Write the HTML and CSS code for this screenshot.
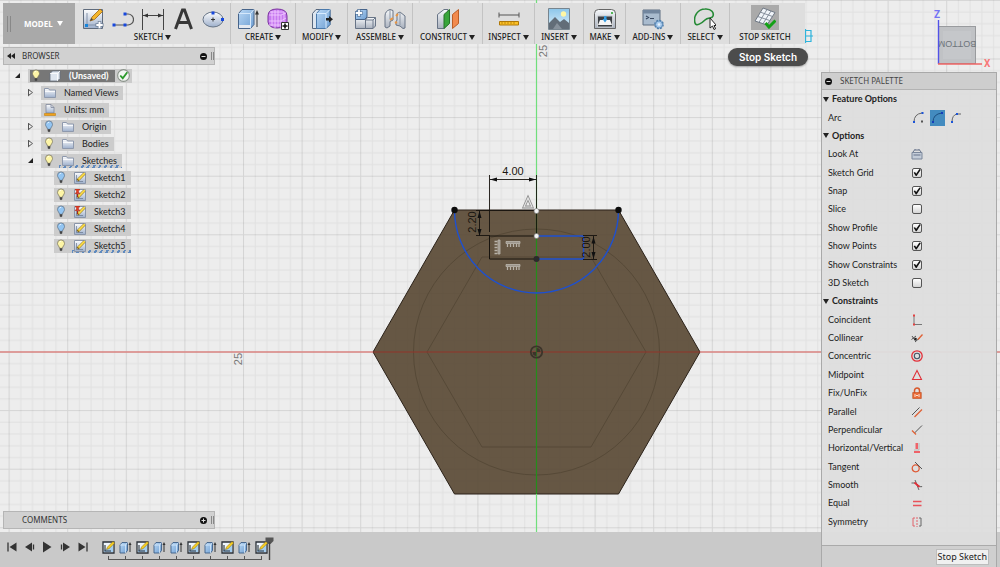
FILE: index.html
```html
<!DOCTYPE html>
<html lang="en">
<head>
<meta charset="utf-8">
<title>Unsaved - Model</title>
<link rel="stylesheet" href="styles.css">
</head>
<body>
<svg class="defs" aria-hidden="true">
  <defs>
    <linearGradient id="gBlue" x1="0" y1="0" x2="1" y2="1"><stop offset="0" stop-color="#b9d8f6"/><stop offset="1" stop-color="#6f9fd2"/></linearGradient>
    <linearGradient id="gGrey" x1="0" y1="0" x2="0" y2="1"><stop offset="0" stop-color="#f7f9fb"/><stop offset="1" stop-color="#a9b1be"/></linearGradient>
    <linearGradient id="gSheet" x1="0" y1="0" x2="0" y2="1"><stop offset="0" stop-color="#fdfdfd"/><stop offset="1" stop-color="#9eb0cc"/></linearGradient>
    <linearGradient id="gSky" x1="0" y1="0" x2="0" y2="1"><stop offset="0" stop-color="#8cc6ea"/><stop offset="1" stop-color="#dff0fa"/></linearGradient>
  </defs>
  <symbol id="bulb-on" viewBox="0 0 10 14"><path d="M5 1a3.8 3.8 0 0 1 3.8 3.8C8.800 6.800 6.800 8 6.500 10h-3C3.200 8 1.200 6.800 1.200 4.800A3.800 3.800 0 0 1 5 1z" fill="#fdf5a6" stroke="#77735d" stroke-width=".8"/><path d="M3.600 10h2.800v2L5 13.300 3.600 12z" fill="#444"/><path d="M3.500 3.500q.7-1 1.700-1" stroke="#fff" stroke-width="1" fill="none"/></symbol>
  <symbol id="bulb-off" viewBox="0 0 10 14"><path d="M5 1a3.800 3.800 0 0 1 3.800 3.800C8.800 6.800 6.800 8 6.500 10h-3C3.200 8 1.200 6.800 1.200 4.800A3.800 3.800 0 0 1 5 1z" fill="#93c5f2" stroke="#5d7186" stroke-width=".8"/><path d="M3.600 10h2.800v2L5 13.300 3.600 12z" fill="#444"/><path d="M3.500 3.500q.7-1 1.700-1" stroke="#fff" stroke-width="1" fill="none"/></symbol>
  <symbol id="folder" viewBox="0 0 12 12"><path d="M.5 10.500v-9h4l1 1.500h6v7.500z" fill="url(#gSheet)" stroke="#8e99ad"/><path d="M1 4.500h10" stroke="#fff" stroke-width=".8"/></symbol>
  <symbol id="units" viewBox="0 0 12 12"><path d="M2 9V.5h5l3 3V9z" fill="url(#gSheet)" stroke="#7d879a" stroke-width=".8"/><path d="M7 .5v3h3" fill="none" stroke="#7d879a" stroke-width=".8"/><path d="M.5 9.500h11v2H.5z" fill="#f0a21c" stroke="#c2800c" stroke-width=".6"/></symbol>
  <symbol id="cube" viewBox="0 0 12 12"><path d="M1 3.500L3.500 1H11v7.500L8.500 11H1z" fill="#dfe6ef" stroke="#65707f" stroke-width=".8"/><path d="M1 3.500h7.500V11" fill="none" stroke="#fff" stroke-width=".8"/><path d="M8.500 3.500L11 1" stroke="#fff" stroke-width=".8"/></symbol>
  <symbol id="sk" viewBox="0 0 12 12"><path d="M.5.5h11v11H.5z" fill="url(#gSheet)" stroke="#8a95a8"/><path d="M2.500 3v6.500H9" fill="none" stroke="#66758e" stroke-width=".7"/><path d="M3.500 8.500L10.500 1.500" stroke="#8b6d18" stroke-width="2.600"/><path d="M4.500 7.500L10.800 1.200" stroke="#fbdc4a" stroke-width="1.800"/></symbol>
  <symbol id="sk-pin" viewBox="0 0 12 12"><use href="#sk"/><path d="M1.500 0h4v1.200h-1V3L6 4.700H1L2.500 3V1.200h-1z" fill="#e23b22" stroke="#a82614" stroke-width=".5"/><path d="M3.500 5v3" stroke="#a82614"/></symbol>
  <symbol id="tsk" viewBox="0 0 13 13"><path d="M1 1h11v11H1z" fill="#eef5fc" stroke="#2b3138" stroke-width="1.300"/><path d="M2 9l9-5v7H2z" fill="#a3cdf0"/><path d="M3 4v6h6" fill="none" stroke="#2b3138" stroke-width="1.100"/><path d="M4.500 8.500l1-2.500L11 .5l1.700 1.600L7 7.700z" fill="#f8cf23" stroke="#806715" stroke-width=".5"/></symbol>
  <symbol id="tex" viewBox="0 0 13 13"><path d="M1 4l2-2.500h5.500v8L6.500 12H1z" fill="url(#gBlue)" stroke="#3d5e86" stroke-width=".9"/><path d="M1 4h5.500v8M6.500 4l2-2.500" fill="none" stroke="#e3f0fd" stroke-width=".7"/><path d="M11 11V3" stroke="#333"/><path d="M9.500 4L11 1l1.500 3z" fill="#333"/></symbol>
</svg>

<div class="app">
  <svg class="scene" viewBox="0 0 1000 567" preserveAspectRatio="xMidYMid slice" role="img" aria-label="Sketch canvas">
    <defs>
      <pattern id="grid" x="536" y="351.500" width="58.600" height="58.600" patternUnits="userSpaceOnUse">
        <path d="M12.200 0v58.600M23.900 0v58.600M35.700 0v58.600M47.400 0v58.600M0 12.200h58.600M0 23.900h58.600M0 35.700h58.600M0 47.400h58.600" stroke="#000" stroke-opacity=".05"/>
        <path d="M.5 0v58.600M0 .5h58.600" stroke="#000" stroke-opacity=".1"/>
      </pattern>
    </defs>
    <rect width="1000" height="567" fill="#ededed"/>
    <rect width="1000" height="567" fill="url(#grid)"/>
    <path d="M373 352L454.500 210H618.500L700 352 618.500 494H454.500z" fill="#665744" stroke="#2a2118" stroke-width="1"/>
    <path d="M373 352L454.500 210H618.500L700 352 618.500 494H454.500z" fill="url(#grid)" opacity=".25"/>
    <g fill="none" stroke="#564937" stroke-width="1"><circle cx="536.500" cy="352" r="123"/><path d="M427 352L482 257H591L646 352 591 447H482z"/></g>
    <path d="M0 352H373M700 352H1000" stroke="#dc8583" stroke-width="1.500"/>
    <path d="M373 352H700" stroke="#93352a"/>
    <path d="M536.500 0V210" stroke="#70df7c" stroke-width="1.200"/>
    <path d="M536.500 210V494" stroke="#258c1c" stroke-width="1.200"/>
    <path d="M536.500 494V567" stroke="#70df7c" stroke-width="1.200"/>
    <circle cx="536.500" cy="352" r="5.700" fill="none" stroke="#3c342a" stroke-width="1.800"/>
    <path d="M536.500 352v-4a4 4 0 0 1 4 4zM536.500 352v4a4 4 0 0 1-4-4z" fill="#3c342a"/>
    <path d="M454.500 210A82 83 0 0 0 618.500 210" fill="none" stroke="#1e50cf" stroke-width="1.400"/>
    <path d="M536.500 236H583.500V259H536.500" fill="none" stroke="#1e50cf" stroke-width="1.400"/>
    <g stroke="#16120d" fill="none">
      <path d="M536.500 236H489.500V259H536.500"/>
      <path d="M489.500 175V232M536.500 175V236M490 179.500H536M476 210.500H536M476 235.500H490M479.500 211V236M583 235.500H597M583 259.500H597M593.500 236V259" stroke-width=".9"/>
    </g>
    <g fill="#111"><path d="M490 179.500l7-2v4zM536 179.500l-7-2v4zM479.500 211l-2 7h4zM479.500 236l-2-7h4zM593.500 236.500l-2 7h4zM593.500 259l-2-7h4z"/></g>
    <g class="dim"><text x="513" y="175" text-anchor="middle">4.00</text><text transform="translate(476 222) rotate(-90)" text-anchor="middle">2.20</text><text transform="translate(590 247) rotate(-90)" text-anchor="middle">2.00</text></g>
    <g class="tick"><text transform="translate(547 51) rotate(-90)" text-anchor="middle">25</text><text transform="translate(241.500 359) rotate(-90)" text-anchor="middle">25</text></g>
    <path d="M524 207l4-9 4 9z" fill="none" stroke="#8c8c8c" stroke-width="2.800"/><path d="M524 207l4-9 4 9z" fill="none" stroke="#e4e4e4" stroke-width="1.200"/>
    <g fill="none">
      <path d="M506 241.500h14v2h-14zM506 264.500h14v2h-14z" fill="#9c958b" stroke="#bdb7ae" stroke-width=".8"/>
      <path d="M507.500 244v3M510.500 244v3M513.500 244v3M516.500 244v3M519 244v3M507.500 267v3M510.500 267v3M513.500 267v3M516.500 267v3M519 267v3" stroke="#b8b2a8" stroke-width="1.300"/>
      <path d="M498 240v14h2v-14z" fill="#9c958b" stroke="#bdb7ae" stroke-width=".8"/>
      <path d="M497.500 241.500h-3M497.500 244.500h-3M497.500 247.500h-3M497.500 250.500h-3M497.500 253.500h-3" stroke="#b8b2a8" stroke-width="1.300"/>
    </g>
    <g fill="#0c0c0c"><circle cx="454.500" cy="210" r="3.200"/><circle cx="618.500" cy="210" r="3.200"/><circle cx="536.500" cy="259" r="3" fill="#2b2b2b"/></g>
    <g fill="#f4f4f4" stroke="#777" stroke-width=".7"><circle cx="536.500" cy="211" r="2.500"/><circle cx="536.500" cy="236" r="2.500"/></g>
    <path d="M805.500 30.500H811V34M811 38V41.500H805.500M805.500 29V43M805 36H813M811 33V39" fill="none" stroke="#2fb4dc" stroke-width="1.200"/>
  </svg>

  <svg class="viewcube" viewBox="0 0 64 64" role="img" aria-label="View cube">
    <rect x="8.500" y="19.500" width="37" height="37" fill="#c0c2c5" stroke="#999b9e"/><rect x="13" y="24" width="28" height="28" fill="#c8cacd" opacity=".6"/>
    <text class="cube-face" transform="translate(27 34) rotate(180)" text-anchor="middle">BOTTOM</text>
    <path d="M8.500 13V57" stroke="#5252e8" stroke-width="1.400"/><path d="M8 57H52" stroke="#ef6565" stroke-width="1.400"/>
    <text class="axis axis-z" x="4" y="11">Z</text><text class="axis axis-x" x="54" y="60">X</text>
  </svg>

  <header class="toolbar">
    <button class="workspace"><span class="grip"></span>MODEL<i class="caret"></i></button>
    <section class="group"><div class="tools">
      <svg viewBox="0 0 22 22"><path d="M1.500 1.500h19v19h-19z" fill="url(#gSheet)" stroke="#5f6b7c"/><path d="M5 5v12h11" fill="none" stroke="#8291a9"/><path d="M8 13l2-4 8-8 2.500 2.500-8 8z" fill="#f4b62c" stroke="#9b6415" stroke-width=".8"/><path d="M8 13l1.500-3 1.500 1.500z" fill="#444"/><path d="M3 16h3v3H3z" fill="#1785db"/><path d="M17.500 13v8M13.500 17h8" stroke="#6e7f96" stroke-width="3.400"/><path d="M17.500 13.800v6.400M14.300 17h6.400" stroke="#fff" stroke-width="2"/></svg>
      <svg viewBox="0 0 22 22"><path d="M2 17h11M13 6h3a5.500 5.500 0 0 1 0 11h-3" fill="none" stroke="#555" stroke-width="1.200"/><path d="M.5 15.500h3v3h-3zM11.500 15.500h3v3h-3zM11.500 4.500h3v3h-3z" fill="#1748dd"/></svg>
      <svg viewBox="0 0 22 22"><path d="M.5 1v21M21.500 1v21M1 7.500h20" stroke="#444"/><path d="M1 7.500l5-2v4zM21 7.500l-5-2v4z" fill="#333"/></svg>
      <svg viewBox="0 0 22 22"><path d="M3.500 21L10.500 2h2L19.500 21M6.500 14.500h10" fill="none" stroke="#383838" stroke-width="3"/></svg>
      <svg viewBox="0 0 22 22"><ellipse cx="11" cy="11.500" rx="10" ry="7.500" fill="url(#gSheet)" stroke="#667486"/><path d="M9 11.500h4M11 9.500v4" stroke="#333"/><path d="M9.500 3.500h3v3h-3zM19 10h3v3h-3z" fill="#1748dd"/></svg>
    </div><button class="menu">SKETCH<i class="caret"></i></button></section>
    <section class="group"><div class="tools">
      <svg viewBox="0 0 22 22"><path d="M1.500 5.500L5 1.500h12v15l-3.500 4h-12z" fill="url(#gBlue)" stroke="#47648a"/><path d="M1.500 5.500h12v15M13.500 5.500l3.500-4" fill="none" stroke="#d5e8fb"/><path d="M2 17h11v3H2z" fill="#e4e9f0"/><path d="M20 19V5" stroke="#333"/><path d="M18 6.500L20 2l2 4.500z" fill="#333"/></svg>
      <svg viewBox="0 0 22 22"><path d="M1 8q0-7 9-7 10 0 10 7v6q-2 6-10 6T1 14z" fill="#c77af0" stroke="#7b329f"/><path d="M2 7h12M8 2v18M14 7v13M2 13h12l5-3M14 7l5-2M3 4h14M17 4v12M2 17h12M5 3v15M11 2v17" fill="none" stroke="#f2c9ff" stroke-width=".9"/><path d="M14.500 14.500h7v7h-7z" fill="#fff" stroke="#333"/><path d="M18 15.500v5M15.500 18h5" stroke="#111" stroke-width="1.600"/></svg>
    </div><button class="menu">CREATE<i class="caret"></i></button></section>
    <section class="group"><div class="tools">
      <svg viewBox="0 0 22 22"><path d="M1.500 5.500L5 1.500h14v15l-4 4h-13.500z" fill="#dce5ef" stroke="#56677d"/><path d="M5.500 5.500L9 1.500h10v15l-4 4H5.500z" fill="url(#gBlue)" stroke="#4a79ab"/><path d="M15 5.500v15M15 5.500l4-4M5.500 5.500H15" fill="none" stroke="#d9ecff"/><path d="M15 10h3V8l4 3.300-4 3.200v-2h-3z" fill="#222"/></svg>
    </div><button class="menu">MODIFY<i class="caret"></i></button></section>
    <section class="group"><div class="tools">
      <svg viewBox="0 0 22 22"><path d="M1.500 11.500h10v9h-10zM11.500 12l2-2.500h8v8.500l-2.500 2.500h-7.500z" fill="url(#gGrey)" stroke="#687486"/><path d="M1.500 4L4 1.500h9V9l-2.500 2.500h-9z" fill="url(#gBlue)" stroke="#47648a"/><path d="M11.500 12h7.500v8.500M19 12l2.500-2.500" fill="none" stroke="#6f7b8c"/><path d="M5 1v8M1 5h8" stroke="#4a6b92" stroke-width="3"/><path d="M5 1.700v6.600M1.700 5h6.600" stroke="#fff" stroke-width="1.800"/></svg>
      <svg viewBox="0 0 22 22"><path d="M1 19V8q0-5 5-6.500l3 1V12l-3 1.500V18l-3 2zM21 20V8l-5-4-3 1.500V12l-1 2v3l4 1 3 2.500z" fill="url(#gGrey)" stroke="#687486"/><path d="M6 2v9M16 4v13" stroke="#8d97a5" fill="none"/><path d="M6 12l3-2M12 8l2-2M11 15l2-1" stroke="#e99643" stroke-width="2"/></svg>
    </div><button class="menu">ASSEMBLE<i class="caret"></i></button></section>
    <section class="group"><div class="tools">
      <svg viewBox="0 0 22 22"><path d="M.5 6.500L7 1.500h4v14L7 20.500H.5z" fill="url(#gGrey)" stroke="#687486"/><path d="M7 6.500L12.500 1.500v14L7 20.500z" fill="#39a53b" stroke="#257428"/><path d="M15.500 6.500L21.500 1.500v14l-6 5z" fill="#f28a4d" stroke="#bb5e28"/></svg>
    </div><button class="menu">CONSTRUCT<i class="caret"></i></button></section>
    <section class="group"><div class="tools">
      <svg viewBox="0 0 22 22"><path d="M1 4.500v5M21 4.500v5M1 7h20" stroke="#555" fill="none"/><path d="M1.500 13.500h19v3.500h-19z" fill="#fbc127" stroke="#b07807"/><path d="M4 14v2M7 14v2M10 14v2M13 14v2M16 14v2" stroke="#a87406" stroke-width=".7"/></svg>
    </div><button class="menu">INSPECT<i class="caret"></i></button></section>
    <section class="group"><div class="tools">
      <svg viewBox="0 0 22 22"><path d="M.5.5h21v21H.5z" fill="url(#gSky)" stroke="#77858f"/><circle cx="15.500" cy="6" r="2.700" fill="#fff7a5"/><path d="M1 15l6-6 5 5 4-3 5 4v6H1z" fill="#626d78"/><path d="M5 21l4-6 5 6z" fill="#87919b"/></svg>
    </div><button class="menu">INSERT<i class="caret"></i></button></section>
    <section class="group"><div class="tools">
      <svg viewBox="0 0 22 22"><path d="M.5 5.500q0-4 4-4h13q4 0 4 4v15H.5z" fill="url(#gGrey)" stroke="#666"/><path d="M3.500 8h15v11h-15z" fill="#3b3f44" stroke="#c9ccd0"/><path d="M6 12h10l2 5H4z" fill="#f4f4f4"/><path d="M10 8h2.500v4H10z" fill="#379ce0"/><path d="M8.500 11h5L11 14.500z" fill="#379ce0"/><circle cx="18" cy="5" r="1" fill="#20a523"/></svg>
    </div><button class="menu">MAKE<i class="caret"></i></button></section>
    <section class="group"><div class="tools">
      <svg viewBox="0 0 22 22"><path d="M1 2h17v15H1z" fill="#a9bbce" stroke="#5d6d80"/><path d="M1 2h17v3.500H1z" fill="#72869e"/><path d="M4 8l2.500 1.500L4 11M8 10.500h4" fill="none" stroke="#394961" stroke-width="1.200"/><circle cx="17" cy="16.500" r="4" fill="#a7caed" stroke="#4e7dab" stroke-width="1.700" stroke-dasharray="2 1.100"/><circle cx="17" cy="16.500" r="3.500" fill="#a7caed" stroke="#4e7dab" stroke-width=".7"/><circle cx="17" cy="16.500" r="1.300" fill="#e8f2fb"/></svg>
    </div><button class="menu">ADD-INS<i class="caret"></i></button></section>
    <section class="group"><div class="tools">
      <svg viewBox="0 0 22 22"><path d="M1 15C-1 8 4 1 11 1c7-.5 9 4 8 7s-5 1-8 4-9 7-10 3z" fill="none" stroke="#258a35" stroke-width="1.600"/><path d="M16 10v10l2.500-2 1.500 3.500 1.600-.8L20 17.500h2.500z" fill="#fff" stroke="#222" stroke-width="1"/></svg>
    </div><button class="menu">SELECT<i class="caret"></i></button></section>
    <section class="group"><div class="tools active">
      <svg viewBox="0 0 22 22"><path d="M1 14L9 1l12 4.500L13 18z" fill="#f0f4f9" stroke="#6f7884"/><path d="M3.800 9.500l12 4M6.500 5.200L18.500 9.500M5 15.300L13 2.500M9 16.700l8-12.700" stroke="#7b8592" stroke-width=".9" fill="none"/><path d="M11.500 16l3.500 4 6.500-6.500" fill="none" stroke="#13a016" stroke-width="3"/></svg>
    </div><button class="menu">STOP SKETCH</button></section>
  </header>
  <div class="tooltip" role="tooltip">Stop Sketch</div>

  <aside class="left">
    <div class="bar"><svg class="rewind" viewBox="0 0 8 6"><path d="M4 0v6L0 3zM8 0v6L4 3z" fill="#222"/></svg><span>BROWSER</span><button class="round" aria-label="Collapse browser"><svg viewBox="0 0 7 7"><circle cx="3.500" cy="3.500" r="3.500" fill="#111"/><path d="M1.500 3.500h4" stroke="#ddd"/></svg></button><span class="grip end"></span></div>
    <ul class="tree">
      <li class="row"><i class="tri open"></i><div class="chip root"><span class="root-name"><svg class="bulb"><use href="#bulb-on"/></svg><svg class="ico"><use href="#cube"/></svg><b>(Unsaved)</b></span><svg class="ok" viewBox="0 0 12 12"><circle cx="6" cy="6" r="5.400" fill="#f2f5f2" stroke="#8a938a"/><path d="M3 6l2.300 2.500L9.500 3" fill="none" stroke="#2c9a2c" stroke-width="1.700"/></svg></div></li>
      <li class="row l1"><i class="tri"></i><div class="chip"><svg class="ico"><use href="#folder"/></svg><span>Named Views</span></div></li>
      <li class="row l1"><i class="tri none"></i><div class="chip"><svg class="ico"><use href="#units"/></svg><span>Units: mm</span></div></li>
      <li class="row l1"><i class="tri"></i><div class="chip"><svg class="bulb"><use href="#bulb-off"/></svg><svg class="ico"><use href="#folder"/></svg><span>Origin</span></div></li>
      <li class="row l1"><i class="tri"></i><div class="chip"><svg class="bulb"><use href="#bulb-on"/></svg><svg class="ico"><use href="#folder"/></svg><span>Bodies</span></div></li>
      <li class="row l1"><i class="tri open"></i><div class="chip hatch"><svg class="bulb"><use href="#bulb-on"/></svg><svg class="ico"><use href="#folder"/></svg><span>Sketches</span></div></li>
      <li class="row l2"><div class="chip"><svg class="bulb"><use href="#bulb-off"/></svg><svg class="ico"><use href="#sk"/></svg><span>Sketch1</span></div></li>
      <li class="row l2"><div class="chip"><svg class="bulb"><use href="#bulb-on"/></svg><svg class="ico"><use href="#sk-pin"/></svg><span>Sketch2</span></div></li>
      <li class="row l2"><div class="chip"><svg class="bulb"><use href="#bulb-off"/></svg><svg class="ico"><use href="#sk-pin"/></svg><span>Sketch3</span></div></li>
      <li class="row l2"><div class="chip"><svg class="bulb"><use href="#bulb-off"/></svg><svg class="ico"><use href="#sk"/></svg><span>Sketch4</span></div></li>
      <li class="row l2"><div class="chip hatch"><svg class="bulb"><use href="#bulb-on"/></svg><svg class="ico"><use href="#sk"/></svg><span>Sketch5</span></div></li>
    </ul>
    <div class="bar comments"><span>COMMENTS</span><button class="round" aria-label="Expand comments"><svg viewBox="0 0 7 7"><circle cx="3.500" cy="3.500" r="3.500" fill="#111"/><path d="M1.500 3.500h4M3.500 1.500v4" stroke="#ddd"/></svg></button><span class="grip end"></span></div>
  </aside>

  <footer class="timeline">
    <div class="player">
      <button aria-label="Go to start"><svg viewBox="0 0 12 12"><path d="M2 1.500v9" stroke="#333" stroke-width="1.300"/><path d="M10.500 1.500v9L3.500 6z" fill="#333"/></svg></button>
      <button aria-label="Step back"><svg viewBox="0 0 12 12"><path d="M8 1.500v9L1 6z" fill="#333"/><path d="M9.500 3.500v5" stroke="#333" stroke-width="1.300"/></svg></button>
      <button aria-label="Play"><svg viewBox="0 0 12 12"><path d="M1 .5v11L9.500 6z" fill="#333"/></svg></button>
      <button aria-label="Step forward"><svg viewBox="0 0 12 12"><path d="M3 1.500v9L10 6z" fill="#333"/><path d="M1.500 3.500v5" stroke="#333" stroke-width="1.300"/></svg></button>
      <button aria-label="Go to end"><svg viewBox="0 0 12 12"><path d="M9 1.500v9" stroke="#333" stroke-width="1.300"/><path d="M.5 1.500v9L7.500 6z" fill="#333"/></svg></button>
    </div>
    <ol class="features">
      <li><svg><use href="#tsk"/></svg></li><li><svg><use href="#tex"/></svg></li><li><svg><use href="#tsk"/></svg></li><li><svg><use href="#tex"/></svg></li><li><svg><use href="#tex"/></svg></li><li><svg><use href="#tsk"/></svg></li><li><svg><use href="#tex"/></svg></li><li><svg><use href="#tsk"/></svg></li><li><svg><use href="#tex"/></svg></li><li><svg><use href="#tsk"/></svg></li>
    </ol>
    <svg class="marker" viewBox="0 0 9 23"><path d="M.5.5h8v3.500L5.500 7h-2L.5 4z" fill="#555"/><path d="M4.500 5v18" stroke="#444" stroke-width="1.400"/></svg>
  </footer>

  <form class="palette">
    <h2 class="pal-head"><svg viewBox="0 0 7 7"><circle cx="3.500" cy="3.500" r="3.500" fill="#111"/><path d="M1.500 3.500h4" stroke="#ddd"/></svg>SKETCH PALETTE</h2>
    <div class="pal-body">
      <h3><i class="caret"></i>Feature Options</h3>
      <div class="opt"><span>Arc</span><div class="arcs">
        <button type="button" aria-label="3-point arc"><svg viewBox="0 0 15 15"><path d="M3 12Q3 4 11 3" fill="none" stroke="#666"/><path d="M2 11h2v2H2zM10.500 2h2v2h-2z" fill="#1c55d8"/><path d="M10 10.500h2v2h-2z" fill="#555"/></svg></button>
        <button type="button" class="on" aria-label="Center point arc"><svg viewBox="0 0 15 15"><path d="M3 12Q3 4 12 3" fill="none" stroke="#1c4f80"/><path d="M2 11h2v2H2zM11 2h2v2h-2z" fill="#153dbb"/></svg></button>
        <button type="button" aria-label="Tangent arc"><svg viewBox="0 0 15 15"><path d="M3 12Q3 5 8 4h4" fill="none" stroke="#666"/><path d="M2 11h2v2H2zM7 3h2v2H7z" fill="#1c55d8"/></svg></button>
      </div></div>
      <h3><i class="caret"></i>Options</h3>
      <div class="opt"><span>Look At</span><button type="button" class="con" aria-label="Look At"><svg viewBox="0 0 12 12"><path d="M1 4.500h10v6.500H1z" fill="#c3ccd8" stroke="#7b879b"/><path d="M2 4L3.500 2h5L10 4M4 2V1M8 2V1M2.500 7h7" fill="none" stroke="#66738a"/></svg></button></div>
      <label class="opt"><span>Sketch Grid</span><input type="checkbox" checked></label>
      <label class="opt"><span>Snap</span><input type="checkbox" checked></label>
      <label class="opt"><span>Slice</span><input type="checkbox"></label>
      <label class="opt"><span>Show Profile</span><input type="checkbox" checked></label>
      <label class="opt"><span>Show Points</span><input type="checkbox" checked></label>
      <label class="opt"><span>Show Constraints</span><input type="checkbox" checked></label>
      <label class="opt"><span>3D Sketch</span><input type="checkbox"></label>
      <h3><i class="caret"></i>Constraints</h3>
      <div class="opt"><span>Coincident</span><button type="button" class="con" aria-label="Coincident"><svg viewBox="0 0 12 12"><path d="M3 2v8.500h8" fill="none" stroke="#777"/><path d="M2 .5h2v2H2zM2 9.500h2v2H2z" fill="#e34040"/></svg></button></div>
      <div class="opt"><span>Collinear</span><button type="button" class="con" aria-label="Collinear"><svg viewBox="0 0 12 12"><path d="M1 4l3.500 5M.5 7.500L5 4M4 10l4.500-4" fill="none" stroke="#444" stroke-width=".9"/><circle cx="4.500" cy="7" r="1.300" fill="#222"/><path d="M7 7.500L11.500 2.500" stroke="#e06034" stroke-width="1.300"/></svg></button></div>
      <div class="opt"><span>Concentric</span><button type="button" class="con" aria-label="Concentric"><svg viewBox="0 0 12 12"><circle cx="6" cy="6" r="5.200" fill="none" stroke="#e22f38" stroke-width="1.300"/><circle cx="6" cy="6" r="2.700" fill="none" stroke="#455566" stroke-width="1.100"/></svg></button></div>
      <div class="opt"><span>Midpoint</span><button type="button" class="con" aria-label="Midpoint"><svg viewBox="0 0 12 12"><path d="M1.500 10.500L6 1.500l4.500 9z" fill="none" stroke="#df3038" stroke-width="1.100"/></svg></button></div>
      <div class="opt"><span>Fix/UnFix</span><button type="button" class="con" aria-label="Fix/UnFix"><svg viewBox="0 0 12 12"><path d="M3.500 6V3.500a2.500 2.500 0 0 1 5 0V6" fill="none" stroke="#d9582b" stroke-width="1.500"/><path d="M1.700 5.500h8.600v6H1.700z" fill="#ea6a35" stroke="#b94920" stroke-width=".6"/><path d="M4 7v3M8 7v3M5 8.500h2" stroke="#fbe3d6"/></svg></button></div>
      <div class="opt"><span>Parallel</span><button type="button" class="con" aria-label="Parallel"><svg viewBox="0 0 12 12"><path d="M1 9L8.500 1.500" stroke="#555"/><path d="M3.500 11L11 3.500" stroke="#e06034" stroke-width="1.300"/></svg></button></div>
      <div class="opt"><span>Perpendicular</span><button type="button" class="con" aria-label="Perpendicular"><svg viewBox="0 0 12 12"><path d="M3.500 9L11 1.500" stroke="#555"/><path d="M1 6.500L5 10.500" stroke="#e06034" stroke-width="1.300"/></svg></button></div>
      <div class="opt"><span>Horizontal/Vertical</span><button type="button" class="con" aria-label="Horizontal/Vertical"><svg viewBox="0 0 12 12"><path d="M4.500 1h2.500v6H4.500z" fill="#ef6269"/><path d="M3 9h6v2H3z" fill="#ef6269"/><path d="M8 1v7H3" fill="none" stroke="#aaa" stroke-width=".7"/></svg></button></div>
      <div class="opt"><span>Tangent</span><button type="button" class="con" aria-label="Tangent"><svg viewBox="0 0 12 12"><circle cx="4.700" cy="7.300" r="3.500" fill="none" stroke="#df5732" stroke-width="1.200"/><path d="M4 1l7 7" stroke="#555"/></svg></button></div>
      <div class="opt"><span>Smooth</span><button type="button" class="con" aria-label="Smooth"><svg viewBox="0 0 12 12"><path d="M.5 4Q5 3 6 6t2 5M4 1Q5 5 8 7t3 0" fill="none" stroke="#555" stroke-width=".9"/><path d="M3.500 3.500L8.500 8" stroke="#e22f38" stroke-width="1.700"/></svg></button></div>
      <div class="opt"><span>Equal</span><button type="button" class="con" aria-label="Equal"><svg viewBox="0 0 12 12"><path d="M2 4.500h8.500M2 8.500h8.500" stroke="#e8525a" stroke-width="1.400"/></svg></button></div>
      <div class="opt"><span>Symmetry</span><button type="button" class="con" aria-label="Symmetry"><svg viewBox="0 0 12 12"><path d="M4 2H2v8h2" fill="none" stroke="#e0626a"/><path d="M8 2h2v8H8" fill="none" stroke="#666"/><path d="M6 1v10" stroke="#e0626a" stroke-dasharray="2 1"/></svg></button></div>
    </div>
    <div class="pal-foot"><button type="button">Stop Sketch</button></div>
  </form>
</div>
</body>
</html>
```
FILE: styles.css
```css
* { box-sizing: border-box; }
body { margin: 0; font: 9px/14px Lato, "Noto Sans", sans-serif; color: #222222; background: #ededed; }
button { font: inherit; color: inherit; background: none; border: 0; padding: 0; margin: 0; }
svg { display: block; flex: none; }
ul, ol { list-style: none; margin: 0; padding: 0; }
h2, h3 { margin: 0; font: inherit; }
.defs { position: absolute; width: 0; height: 0; }

.app { position: relative; display: flex; flex-direction: column; min-height: 100vh; overflow: hidden; }
.scene { position: absolute; inset: 0; width: 100%; height: 100%; }
.dim { font: 11px "Liberation Sans", sans-serif; fill: #1b1712; }
.tick { font: 11px "Liberation Sans", sans-serif; fill: #777777; }
.viewcube { position: absolute; top: 7px; right: 6px; width: 64px; height: 64px; }
.cube-face { font: bold 9px "Liberation Sans", sans-serif; font-weight: normal; fill: #6f757c; }
.axis { font: bold 10px Roboto, sans-serif; }
.axis-z { fill: #7474f4; }
.axis-x { fill: #f87878; }

.caret { display: inline-block; width: 0; height: 0; margin-left: 2px; border: 3px solid transparent; border-top: 5px solid currentColor; border-bottom: 0; }
.grip { width: 4px; height: 16px; border: solid #888888; border-width: 0 1px; }
.workspace, .menu, .bar, .pal-head { font: 8px/12px "Noto Sans", sans-serif; }

.toolbar { position: relative; display: grid; grid-template-columns: 72px 156px 65px 52px 65px 70px 52px 49px 42px 55px 49px 75px; width: max-content; height: 41px; margin: 3px 0 0 3px; background: #dedede; }
.workspace { display: flex; align-items: center; padding-left: 4px; color: #ffffff; background: #a9a9a9; font-weight: bold; }
.workspace .grip { margin-right: 13px; }
.workspace .caret { margin-left: 4px; }
.group { display: flex; flex-direction: column; align-items: center; justify-content: space-between; padding-bottom: 1px; border-right: 1px solid #c3c3c3; }
.group:last-child { border-right: 0; padding-right: 5px; }
.tools { display: flex; justify-content: center; gap: 8px; padding-top: 5px; }
.tools svg { width: 22px; height: 22px; }
.tools.active { width: 28px; height: 25px; margin-top: 2px; padding-top: 2px; background: #aaaaaa; }
.menu { height: 13px; font-weight: 500; white-space: nowrap; color: #222222; }

.tooltip { position: absolute; top: 48px; left: 728px; padding: 0 11px; border-radius: 9px; background: #4c4c4c; color: #ffffff; font: 600 10px/18px Inter, sans-serif; box-shadow: 0 1px 2px #00000055; }

.left { position: relative; display: flex; flex: 1; flex-direction: column; width: 212px; margin: 3px 0 3px 3px; }
.bar { display: flex; align-items: center; height: 18px; padding-left: 3px; background: #d1d1d1; border: 1px solid #b5b5b5; color: #333333; }
.bar .rewind { width: 8px; height: 6px; margin-right: 7px; }
.bar .round { margin-left: auto; }
.round svg { width: 7px; height: 7px; }
.bar .end { width: 3px; height: 8px; margin-left: 4px; }
.comments { margin-top: auto; padding-left: 18px; }

.tree { padding-top: 2px; }
.row { display: flex; align-items: center; height: 17px; padding-left: 12px; }
.l1 { padding-left: 25px; }
.l2 { padding-left: 51px; }
.tri { width: 5px; height: 8px; margin-right: 8px; background: #555555; clip-path: polygon(0 0, 100% 50%, 0 100%, 0 0, 1px 2px, 1px 6px, 4px 4px, 1px 2px); }
.tri.open { height: 5px; background: #222222; clip-path: polygon(100% 0, 100% 100%, 0 100%); }
.tri.none { background: none; }
.chip { display: flex; align-items: center; height: 14px; padding: 0 5px 0 2px; gap: 8px; background: #cccccc; color: #222222; white-space: nowrap; }
.l1 .chip { padding-left: 3px; }
.bulb { width: 10px; height: 13px; }
.ico { width: 12px; height: 12px; }
.hatch { background: repeating-linear-gradient(120deg, #5f8abf 0 2px, transparent 2px 5px) 18px 100% / 100% 3px no-repeat #cccccc; }
.root { gap: 2px; padding: 0 2px; }
.root-name { display: flex; align-items: center; gap: 8px; padding: 0 6px 0 1px; background: #777777; color: #ffffff; height: 12px; }
.ok { width: 13px; height: 13px; }

.timeline { position: relative; display: flex; height: 35px; padding: 9px 6px 0; background: #c9c9c9; }
.player { display: flex; gap: 6px; margin-right: 10px; }
.player button { width: 12px; height: 12px; }
.player svg { width: 12px; height: 12px; }
.features { display: flex; }
.features li { width: 17px; height: 19px; padding-left: 2px; background: linear-gradient(#555555, #555555) 8px 100% / 1px 4px no-repeat, linear-gradient(#555555, #555555) 0 100% / 100% 1px no-repeat; }
.features li:first-child { background-size: 1px 4px, 9px 1px; background-position: 8px 100%, 100% 100%; }
.features li:last-child { background-size: 1px 4px, 9px 1px; }
.features svg { width: 13px; height: 13px; }
.marker { width: 9px; height: 23px; margin: -4px 0 0 -5px; }

.palette { position: absolute; top: 72px; right: 3px; bottom: 0; display: flex; flex-direction: column; width: 176px; border: 1px solid #a9a9a9; border-bottom: 0; background: #dededef5; }
.pal-head { display: flex; align-items: center; gap: 8px; height: 17px; padding-left: 3px; background: #cecece; border-bottom: 1px solid #b3b3b3; color: #444444; }
.pal-head svg { width: 7px; height: 7px; }
.pal-body { display: grid; flex: 1; grid-auto-rows: minmax(18px, 1fr); padding-bottom: 14px; }
.pal-body h3 { display: flex; align-items: center; gap: 3px; font-weight: bold; }
.pal-body .caret { margin-left: 1px; }
.opt { display: grid; grid-template-columns: 83px 1fr; align-items: center; padding-left: 6px; }
.opt input { appearance: none; display: grid; justify-items: center; width: 10px; height: 10px; margin: 0 0 0 1px; border: 1px solid #555555; border-radius: 2px; background: linear-gradient(#ffffff, #d5d5d5); }
.opt input:checked::after { content: ""; width: 8px; height: 8px; background: #111111; clip-path: polygon(8% 50%, 25% 42%, 40% 62%, 80% 5%, 98% 12%, 45% 92%, 35% 92%); }
.con, .con svg { width: 12px; height: 12px; }
.arcs { display: flex; gap: 4px; }
.arcs button { width: 15px; height: 16px; }
.arcs .on { background: #438bbf; }
.arcs svg { width: 15px; height: 15px; }
.pal-foot { display: flex; justify-content: flex-end; align-items: center; height: 22px; padding-right: 7px; background: #cfcfcf; border-top: 1px solid #aaaaaa; }
.pal-foot button { height: 16px; padding: 0 1px; background: #f0f0f0; border: 1px solid #bdbdbd; font: 9px/14px "Noto Sans", sans-serif; }
```
